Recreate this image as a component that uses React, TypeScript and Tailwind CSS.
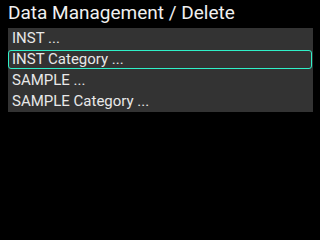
import React from "react";

const items = ["INST ...", "INST Category ...", "SAMPLE ...", "SAMPLE Category ..."];
const selected = 1;

const App: React.FC = () => {
  return (
    <div className="w-[320px] h-[240px] bg-black font-['Roboto',sans-serif] overflow-hidden">
      <div className="pl-2 pt-[1px] h-[28px] text-[19px] leading-[23px] text-[#f0f0f0]">
        Data Management / Delete
      </div>
      <div className="ml-2 w-[305px] bg-[#333333] flex flex-col">
        {items.map((item, index) =>
          index === selected ? (
            <div
              key={index}
              className="my-[1px] h-[19px] flex items-center pl-[3px] border border-[#2ff0c8] rounded-[3px] text-[15px] text-[#e8e8e8] w-[304px]"
            >
              {item}
            </div>
          ) : (
            <div
              key={index}
              className="h-[21px] flex items-center pl-1 text-[15px] text-[#e8e8e8]"
            >
              {item}
            </div>
          )
        )}
      </div>
    </div>
  );
};

export default App;
